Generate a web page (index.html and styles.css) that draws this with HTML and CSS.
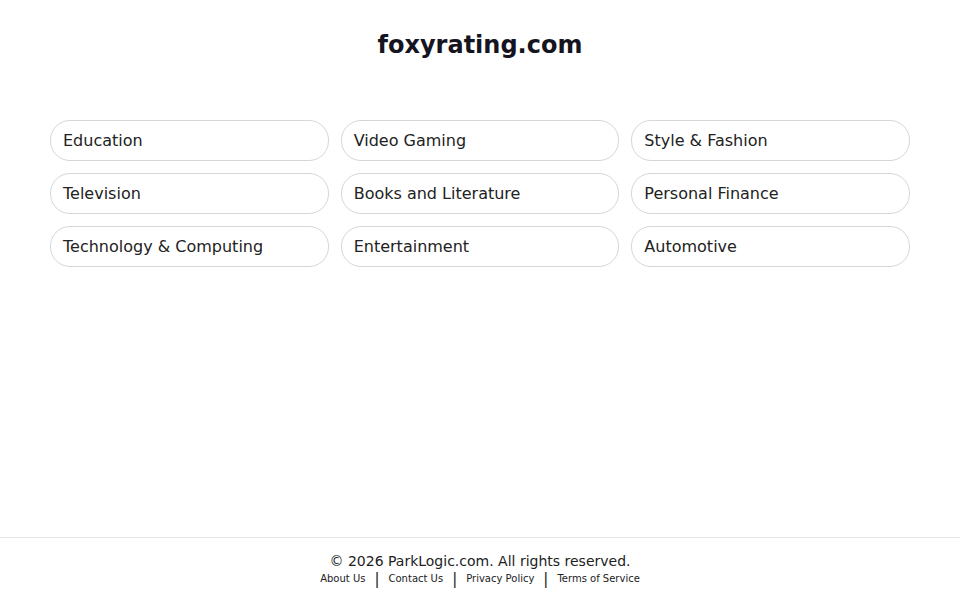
FILE: index.html
```html
<!DOCTYPE html>
<html>
<head>
<meta charset="utf-8">
<link rel="stylesheet" href="styles.css">
</head>
<body>
<div class="page">
  <header class="header"><h1 class="title">foxyrating.com</h1></header>
  <main class="main">
    <div class="grid">
      <a class="pill">Education</a>
      <a class="pill">Video Gaming</a>
      <a class="pill">Style &amp; Fashion</a>
      <a class="pill">Television</a>
      <a class="pill">Books and Literature</a>
      <a class="pill">Personal Finance</a>
      <a class="pill">Technology &amp; Computing</a>
      <a class="pill">Entertainment</a>
      <a class="pill">Automotive</a>
    </div>
  </main>
  <footer class="footer">
    <div class="copy">© 2026 ParkLogic.com. All rights reserved.</div>
    <nav class="links">
      <a>About Us</a><span class="sep">|</span><a>Contact Us</a><span class="sep">|</span><a>Privacy Policy</a><span class="sep">|</span><a>Terms of Service</a>
    </nav>
  </footer>
</div>
</body>
</html>
```
FILE: styles.css
```css
html, body { margin: 0; padding: 0; background: #fff; }
body { font-family: "DejaVu Sans", sans-serif; color: #222; }
.page { display: flex; flex-direction: column; height: 600px; }
.header { padding-top: 31px; text-align: center; }
.title { margin: 0; font-size: 24px; line-height: 28px; font-weight: bold; color: #151522; }
.main { flex: 1; padding-top: 61px; }
.grid { width: 860px; margin: 0 auto; display: grid; grid-template-columns: repeat(3, 1fr); column-gap: 12px; row-gap: 12px; }
.pill { display: flex; align-items: center; height: 39px; padding: 0 12px; border: 1px solid #d6d6d6; border-radius: 20px; font-size: 16px; color: #222; }
.footer { border-top: 1px solid #e6e6e6; height: 63px; text-align: center; box-sizing: border-box; padding-top: 14px; }
.copy { font-size: 14px; line-height: 18px; color: #222; }
.links { margin-top: 2px; font-size: 10px; line-height: 14px; color: #222; display: flex; justify-content: center; align-items: center; }
.links a { color: #222; }
.sep { font-size: 15px; line-height: 14px; margin: 0 9px; color: #222; }
```
